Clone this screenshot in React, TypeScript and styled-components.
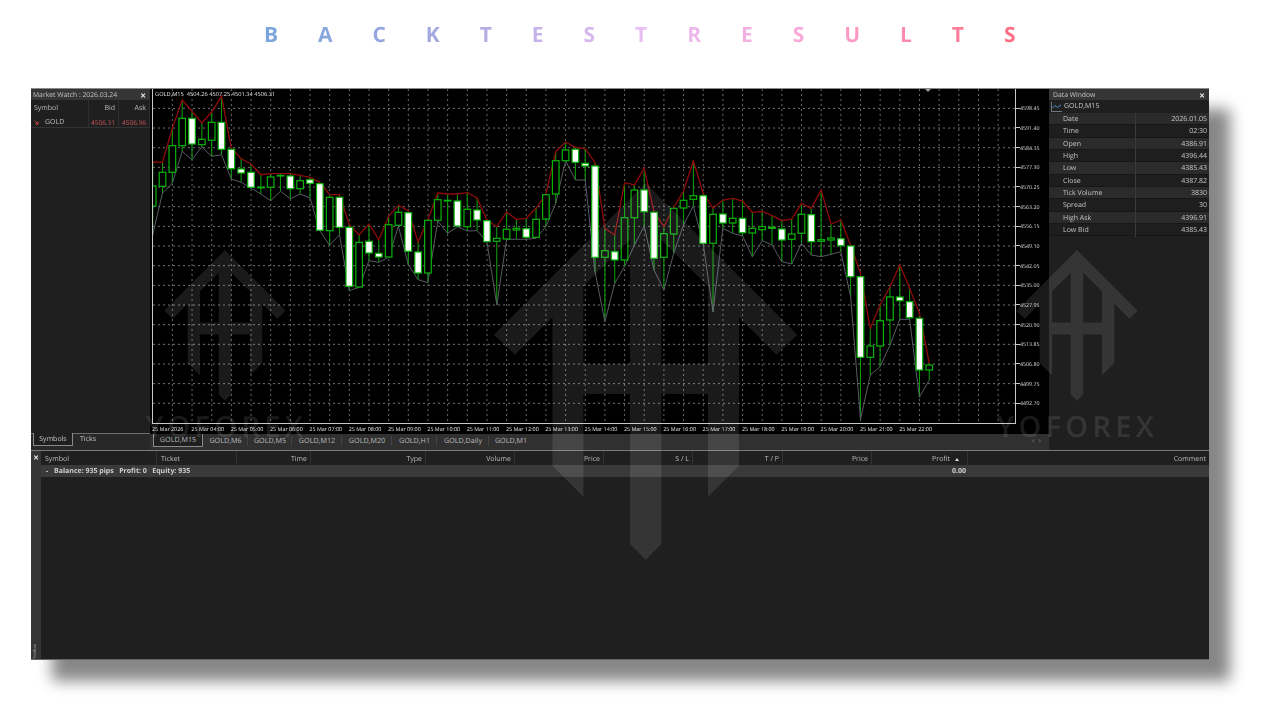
import styled, { createGlobalStyle } from 'styled-components'

// high, body top, body bottom, low, white body
type Candle = [number, number, number, number, number]

const candles: Candle[] = [
  [162, 186, 206, 234.7, 0], [162.3, 172.3, 186.3, 193, 0], [128, 145.7, 172.3, 183, 0], [100, 118.3, 145.7, 151.3, 0],
  [111.3, 118.3, 144, 159.7, 1], [123, 139.3, 144.7, 147, 0], [112, 122.3, 140.3, 156.3, 0], [96.3, 122.3, 149.3, 154.7, 1],
  [148, 149.3, 168.7, 179, 1], [158.7, 169, 173, 182.3, 1], [164, 172.3, 187.3, 188, 1], [174.7, 187.2, 187.6, 194, 0],
  [173.7, 177, 187.3, 200.7, 0], [173.7, 175.4, 176, 191.3, 0], [173.7, 176, 188.7, 198.7, 1], [175.3, 180.7, 188.7, 194, 0],
  [177.3, 179.7, 183.3, 198, 1], [182.3, 183.7, 230.3, 230.7, 1], [194.7, 197.3, 230.7, 245.3, 0], [194.7, 197.3, 227.3, 234.7, 1],
  [224.7, 227.3, 286.3, 290.7, 1], [234.7, 242.3, 287, 287.3, 0], [224, 241.3, 253, 260.7, 1], [239.7, 253.3, 257, 262.3, 1],
  [216.3, 224.7, 257, 257.3, 0], [205.3, 212.3, 225.3, 226.3, 0], [210.7, 212.7, 251.3, 264.7, 1], [242, 252, 273, 279.7, 1],
  [219.7, 220.3, 273, 282.7, 0], [193, 199.7, 220.3, 221, 0], [194, 200.3, 200.8, 233.3, 0], [194, 201, 226, 226.7, 1],
  [192.7, 209.3, 226.7, 231, 0], [198, 210, 220, 230.7, 1], [220, 220.7, 241.7, 241.7, 1], [226.7, 238.3, 241.3, 305, 0],
  [212, 229.3, 239, 239.3, 0], [219.3, 228.3, 230, 239.3, 0], [218.3, 228.7, 237.3, 239.3, 1], [208.3, 219.3, 237.3, 238.3, 0],
  [194, 194.7, 219, 226.7, 0], [151.7, 160.7, 194, 203.3, 0], [142, 150, 160.7, 160.7, 0], [147.3, 149.3, 162.3, 180, 1],
  [148.7, 163.3, 166, 180, 1], [162.7, 166, 257.3, 271.7, 1], [228.3, 250.7, 257.3, 321.7, 0], [235, 251.7, 260, 283.3, 1],
  [182.7, 217.7, 260, 266.7, 0], [185, 190, 217.7, 245, 0], [168.3, 190, 211.7, 226, 1], [211.7, 212.3, 258.3, 270, 1],
  [226.7, 233.7, 257.3, 290, 0], [207.3, 208.3, 234, 253.3, 0], [191, 200.3, 208, 225, 0], [161, 195.7, 199.3, 206, 0],
  [193.3, 195.7, 243.3, 244, 1], [208.3, 214.3, 243.3, 311.7, 0], [200, 214, 223, 228.3, 1], [198.3, 218.3, 223, 233.3, 0],
  [201, 218.3, 232.7, 236, 1], [212.3, 228.3, 233, 256.7, 0], [211.3, 226.7, 229.7, 240.7, 0], [215.7, 227.3, 228.3, 245, 1],
  [220.7, 229, 240, 261.7, 1], [219, 234, 239.3, 264, 0], [203.3, 214.3, 233.3, 243.3, 0], [208.3, 214.7, 241.7, 255, 1],
  [190, 239.7, 241.3, 256.7, 0], [224, 238, 240, 254.3, 0], [220, 238.7, 245.7, 251.7, 1], [245, 246, 276.7, 296.7, 1],
  [273.3, 276.7, 357.3, 419.3, 1], [328.3, 346, 357.3, 375, 0], [305, 320.7, 346, 366.7, 0], [286.7, 297, 320, 345, 0],
  [265, 297, 300.7, 319.3, 1], [288.3, 301.7, 317.7, 319.3, 1], [313.3, 318.3, 370, 397.3, 1], [363.3, 365, 370, 380, 0],
]

const candleX = (i: number) => 152.7 + 9.83 * i
const highs = candles.map((c, i) => `${candleX(i).toFixed(1)},${c[0]}`).join(' ')
const lows = candles.map((c, i) => `${candleX(i).toFixed(1)},${c[3]}`).join(' ')

const prices = ['4598.45', '4591.40', '4584.35', '4577.30', '4570.25', '4563.20', '4556.15', '4549.10', '4542.05', '4535.00', '4527.95', '4520.90', '4513.85', '4506.80', '4499.75', '4492.70']
const hours = ['25 Mar 2026', '25 Mar 04:00', '25 Mar 05:00', '25 Mar 06:00', '25 Mar 07:00', '25 Mar 08:00', '25 Mar 09:00', '25 Mar 10:00', '25 Mar 11:00', '25 Mar 12:00', '25 Mar 13:00', '25 Mar 14:00', '25 Mar 15:00', '25 Mar 16:00', '25 Mar 17:00', '25 Mar 18:00', '25 Mar 19:00', '25 Mar 20:00', '25 Mar 21:00', '25 Mar 22:00']
const chartTabs: [string, number][] = [['GOLD,M15', 50], ['GOLD,M6', 45], ['GOLD,M5', 44], ['GOLD,M12', 50], ['GOLD,M20', 50], ['GOLD,H1', 45], ['GOLD,Daily', 52], ['GOLD,M1', 44]]
const dataRows = [['Date', '2026.01.05'], ['Time', '02:30'], ['Open', '4386.91'], ['High', '4396.44'], ['Low', '4385.43'], ['Close', '4387.82'], ['Tick Volume', '3830'], ['Spread', '30'], ['High Ask', '4396.91'], ['Low Bid', '4385.43']]
const columns = ['Symbol', 'Ticket', 'Time', 'Type', 'Volume', 'Price', 'S / L', 'T / P', 'Price', 'Profit', 'Comment']

const LOGO = 'M0 0L151.7 151.7L130.7 171.7L93.3 134.3V282.7L62.3 313.7V211H15.7V361L0 377L-15.7 361V211H-62.3V313.7L-93.3 282.7V134.3L-130.7 171.7L-151.7 151.7ZM-62.3 103.3V181H-15.7V56.7ZM62.3 103.3L15.7 56.7V181H62.3Z'

export default function App() {
  return (
    <Page>
      <GlobalStyle />
      <Title>BACKTESTRESULTS</Title>
      <Terminal>
        <TopRow>
          <MarketPanel>
            <PanelTitle>
              <span>Market Watch : 2026.03.24</span>
              <CloseMark>×</CloseMark>
            </PanelTitle>
            <QuoteHead>
              <QuoteCell>Symbol</QuoteCell>
              <QuoteCell $right>Bid</QuoteCell>
              <QuoteCell $right>Ask</QuoteCell>
            </QuoteHead>
            <QuoteRow>
              <QuoteCell>
                <svg width="5" height="5" viewBox="0 0 7 7" fill="none" stroke="#d0484c" strokeWidth="1.4">
                  <path d="M1 1L5.5 5.5M2 5.7H5.7V2" />
                </svg>
                <SymbolName>GOLD</SymbolName>
              </QuoteCell>
              <QuoteCell $right $red>4506.31</QuoteCell>
              <QuoteCell $right $red>4506.96</QuoteCell>
            </QuoteRow>
            <Filler />
            <SideTabs>
              <SideTab $active>Symbols</SideTab>
              <SideTab>Ticks</SideTab>
            </SideTabs>
          </MarketPanel>
          <ChartColumn>
            <ChartBlack>
              <PlotColumn>
                <Legend>GOLD,M15&nbsp; 4504.26 4507.25 4501.34 4506.31</Legend>
                <Plot viewBox="153 89 862 334" width="862" height="334">
                  {prices.map((_, i) => (
                    <line key={i} x1="153" x2="1015" y1={108.4 + 19.66 * i} y2={108.4 + 19.66 * i} stroke="#747474" strokeWidth="1" strokeDasharray="2 3" />
                  ))}
                  {Array.from({ length: 44 }, (_, i) => (
                    <line key={i} x1={172.4 + 19.66 * i} x2={172.4 + 19.66 * i} y1="89" y2="423" stroke="#686868" strokeWidth="1" strokeDasharray="2 3" />
                  ))}
                  {candles.map((c, i) => (
                    <line key={i} x1={candleX(i)} x2={candleX(i)} y1={c[0]} y2={c[3]} stroke="#0a9a0a" strokeWidth="1.1" />
                  ))}
                  <polyline points={lows} fill="none" stroke="#565c64" strokeWidth="1" />
                  <polyline points={highs} fill="none" stroke="#8e0a0a" strokeWidth="1.3" />
                  {candles.map((c, i) => (
                    <rect key={i} x={candleX(i) - 3.3} y={c[1]} width="6.6" height={Math.max(c[2] - c[1], 0.6)} fill={c[4] ? '#fff' : '#000'} stroke="#0ab40a" strokeWidth="1.2" />
                  ))}
                  <polygon points="925,89 931,89 928,92" fill="#9a9a9a" />
                </Plot>
                <TimeAxis>
                  {hours.map((h) => (
                    <TimeLabel key={h}>{h}</TimeLabel>
                  ))}
                </TimeAxis>
              </PlotColumn>
              <PriceAxis>
                {prices.map((p) => (
                  <PriceLabel key={p}>{p}</PriceLabel>
                ))}
              </PriceAxis>
            </ChartBlack>
            <ChartTabs>
              {chartTabs.map(([name, w], i) => (
                <ChartTab key={name} $w={w} $active={i === 0}>{name}</ChartTab>
              ))}
              <ScrollArrows>‹ &nbsp;›</ScrollArrows>
            </ChartTabs>
          </ChartColumn>
          <DataPanel>
            <PanelTitle $indent={4}>
              <span>Data Window</span>
              <CloseMark>×</CloseMark>
            </PanelTitle>
            <DataHead>
              <svg width="11" height="10" viewBox="0 0 11 10" fill="none">
                <path d="M.5 0V9.5H11" stroke="#6f7680" />
                <path d="M1.5 6L4 3.5L6.5 5.5L10 3" stroke="#4c8fd6" />
              </svg>
              GOLD,M15
            </DataHead>
            {dataRows.map(([name, value], i) => (
              <DataRow key={name} $dark={i % 2 === 1}>
                <span>{name}</span>
                <span>{value}</span>
              </DataRow>
            ))}
          </DataPanel>
        </TopRow>
        <BottomPanel>
          <ToolStrip>
            <CloseMark>×</CloseMark>
            <ToolName>Toolbox</ToolName>
          </ToolStrip>
          <TradeTable>
            <TradeHead>
              {columns.map((name, i) => (
                <TradeCol key={name + i} $left={i < 2}>
                  {name}
                  {name === 'Profit' && <SortMark />}
                </TradeCol>
              ))}
            </TradeHead>
            <BalanceRow>
              <BalanceText>
                <Dot />
                Balance: 935 pips&nbsp;&nbsp; Profit: 0&nbsp;&nbsp; Equity: 935
              </BalanceText>
              <BalanceValue>0.00</BalanceValue>
            </BalanceRow>
          </TradeTable>
        </BottomPanel>
      </Terminal>
      <Watermark width="1280" height="720" viewBox="0 0 1280 720">
        <g fill="#fff" fillOpacity="0.1" fillRule="evenodd">
          <path d={LOGO} transform="translate(645.7 183)" />
          <path d={LOGO} transform="translate(225 250) scale(.4)" />
          <path d={LOGO} transform="translate(1077 250) scale(.4)" />
          <WatermarkText x="146" y="437">YOFOREX</WatermarkText>
          <WatermarkText x="997" y="437">YOFOREX</WatermarkText>
        </g>
      </Watermark>
    </Page>
  )
}

const GlobalStyle = createGlobalStyle`
  html, body {
    margin: 0;
    background: #fff;
    overflow: hidden;
  }
`

const Page = styled.div`
  position: relative;
  width: 1280px;
  height: 720px;
  padding: 20px 0 0 264px;
  box-sizing: border-box;
  font-family: 'Open Sans', 'Liberation Sans', sans-serif;
  text-rendering: geometricPrecision;
`

const Title = styled.h1`
  width: fit-content;
  height: 68px;
  margin: 0;
  font-size: 21px;
  line-height: 30px;
  font-weight: 700;
  letter-spacing: 39.95px;
  color: transparent;
  background: linear-gradient(90deg, #7aa5dc 0%, #a3a8e0 22%, #e8bdf4 48%, #fba9d8 68%, #ff6b80 96%);
  -webkit-background-clip: text;
  background-clip: text;
`

const Terminal = styled.div`
  display: flex;
  flex-direction: column;
  width: 1178px;
  height: 572px;
  margin-left: -233px;
  background: #1f1f1f;
  border-top: 1px solid #8a8a8a;
  border-bottom: 1px solid #666;
  box-sizing: border-box;
  box-shadow: 21px 21px 14px rgba(0, 0, 0, 0.47);
  color: #c8c8c8;
  font-size: 7px;
  filter: blur(0.35px);
`

const TopRow = styled.div`
  display: flex;
  height: 361px;
`

const MarketPanel = styled.div`
  display: flex;
  flex-direction: column;
  width: 119px;
  background: #1f1f1f;
`

const PanelTitle = styled.div<{ $indent?: number }>`
  display: flex;
  align-items: center;
  justify-content: space-between;
  height: 11px;
  padding: 0 4px 0 ${(p) => p.$indent ?? 2}px;
  background: #353535;
  color: #c4c4c4;
  font-size: 6.8px;
  white-space: nowrap;
`

const CloseMark = styled.span`
  color: #e0e0e0;
  font-size: 10px;
  line-height: 10px;
  font-weight: 700;
`

const QuoteHead = styled.div`
  display: grid;
  grid-template-columns: 58px 30px 31px;
  height: 15px;
`

const QuoteRow = styled(QuoteHead)`
  height: 12px;
  border-bottom: 1px solid #333;
`

const QuoteCell = styled.div<{ $right?: boolean; $red?: boolean }>`
  display: flex;
  align-items: center;
  justify-content: ${(p) => (p.$right ? 'flex-end' : 'flex-start')};
  padding: 2px 3px 0;
  border-right: 1px solid #2e2e2e;
  color: ${(p) => (p.$red ? '#c9555a' : '#bdbdbd')};
  font-size: ${(p) => (p.$red ? '6.5px' : '7px')};
`

const SymbolName = styled.span`
  margin-left: 6px;
`

const Filler = styled.div`
  flex: 1;
`

const SideTabs = styled.div`
  display: flex;
  height: 17px;
  padding-left: 2px;
  background: #282828;
  border-top: 1px solid #6c6c6c;
  box-sizing: border-box;
`

const SideTab = styled.div<{ $active?: boolean }>`
  display: flex;
  align-items: center;
  justify-content: center;
  width: ${(p) => (p.$active ? '40px' : '30px')};
  height: 13px;
  margin-top: -1px;
  background: ${(p) => (p.$active ? '#1f1f1f' : 'transparent')};
  border: 1px solid ${(p) => (p.$active ? '#8a8a8a' : 'transparent')};
  border-top: none;
  box-sizing: border-box;
  color: #c4c4c4;
`

const ChartColumn = styled.div`
  display: flex;
  flex-direction: column;
  width: 899px;
`

const ChartBlack = styled.div`
  display: flex;
  height: 345px;
  padding-left: 2px;
  background: #000;
`

const PlotColumn = styled.div`
  position: relative;
  width: 864px;
`

const Legend = styled.div`
  position: absolute;
  top: 1px;
  left: 3px;
  color: #e0e0e0;
  font-size: 5.7px;
  white-space: nowrap;
`

const Plot = styled.svg`
  display: block;
  border: 1px solid #c8c8c8;
  border-top: none;
`

const TimeAxis = styled.div`
  display: flex;
  height: 10px;
`

const TimeLabel = styled.div`
  flex: none;
  width: 39.33px;
  color: #e4e4e4;
  font-size: 5.4px;
  line-height: 10px;
  white-space: nowrap;
`

const PriceAxis = styled.div`
  display: grid;
  grid-auto-rows: 19.66px;
  padding-top: 9.5px;
`

const PriceLabel = styled.div`
  display: flex;
  align-items: center;
  color: #dcdcdc;
  font-size: 5.3px;
  &::before {
    content: '';
    width: 4px;
    height: 1px;
    background: #c8c8c8;
  }
`

const ChartTabs = styled.div`
  position: relative;
  display: flex;
  height: 16px;
  padding-left: 3px;
  background: #303030;
`

const ChartTab = styled.div<{ $w: number; $active?: boolean }>`
  display: flex;
  align-items: center;
  justify-content: center;
  width: ${(p) => p.$w}px;
  margin-top: ${(p) => (p.$active ? '0' : '2px')};
  height: ${(p) => (p.$active ? '13px' : '10px')};
  background: ${(p) => (p.$active ? '#1f1f1f' : 'transparent')};
  border: 1px solid ${(p) => (p.$active ? '#8a8a8a' : 'transparent')};
  border-top: none;
  border-right-color: ${(p) => (p.$active ? '#8a8a8a' : '#454545')};
  box-sizing: border-box;
  color: #bdbdbd;
  font-size: 7.2px;
  &:nth-last-child(2) {
    border-right-color: transparent;
  }
`

const ScrollArrows = styled.span`
  position: absolute;
  top: 2px;
  right: 8px;
  color: #777;
  font-size: 8px;
  line-height: 10px;
`

const DataPanel = styled.div`
  width: 160px;
  background: #1f1f1f;
`

const DataHead = styled.div`
  display: flex;
  align-items: center;
  gap: 2px;
  height: 13px;
  padding-left: 2px;
  color: #c8c8c8;
  font-size: 7px;
`

const DataRow = styled.div<{ $dark: boolean }>`
  display: grid;
  grid-template-columns: 87px 73px;
  height: 12.33px;
  background: ${(p) => (p.$dark ? '#1e1e1e' : '#2b2b2b')};
  border-bottom: 1px solid #171717;
  box-sizing: border-box;
  color: #c4c4c4;
  line-height: 13px;
  span:first-child {
    padding-left: 14px;
    border-right: 1px solid #3a3a3a;
  }
  span:last-child {
    padding-right: 2px;
    text-align: right;
  }
`

const BottomPanel = styled.div`
  display: flex;
  flex: 1;
  border-top: 1px solid #7a7a7a;
`

const ToolStrip = styled.div`
  display: flex;
  flex-direction: column;
  align-items: center;
  justify-content: space-between;
  width: 10px;
  padding: 1px 0 0;
  background: #353535;
  box-sizing: border-box;
`

const ToolName = styled.span`
  color: #aaa;
  font-size: 4px;
  line-height: 6px;
  writing-mode: vertical-rl;
  transform: rotate(180deg);
`

const TradeTable = styled.div`
  flex: 1;
`

const TradeHead = styled.div`
  display: grid;
  grid-template-columns: 116px 80px 74px 115px 89px 89px 89px 90px 89px 96px 1fr;
  height: 14px;
  align-items: stretch;
`

const TradeCol = styled.div<{ $left?: boolean }>`
  display: flex;
  align-items: center;
  justify-content: ${(p) => (p.$left ? 'flex-start' : 'flex-end')};
  padding: 2px 3px 0 4px;
  border-right: 1px solid #323232;
  color: #bdbdbd;
  &:last-child {
    border-right: none;
  }
`

const SortMark = styled.i`
  width: 0;
  height: 0;
  margin: 0 5px 0 5px;
  border: 2.5px solid transparent;
  border-top: none;
  border-bottom: 3px solid #ddd;
`

const BalanceRow = styled.div`
  display: flex;
  align-items: center;
  justify-content: space-between;
  width: 927px;
  height: 12px;
  padding-top: 1px;
  box-sizing: border-box;
  box-shadow: 241px 0 0 #3a3a3a;
  background: #3a3a3a;
  color: #cfcfcf;
  font-weight: 700;
`

const BalanceText = styled.div`
  display: flex;
  align-items: center;
  padding-left: 5px;
  white-space: pre;
`

const Dot = styled.i`
  width: 2px;
  height: 1px;
  margin-right: 6px;
  background: #bbb;
`

const BalanceValue = styled.div`
  padding-right: 2px;
`

const Watermark = styled.svg`
  position: absolute;
  top: 0;
  left: 0;
  pointer-events: none;
`

const WatermarkText = styled.text`
  font-family: 'Open Sans', sans-serif;
  font-size: 29px;
  font-weight: 600;
  letter-spacing: 4.3px;
`
